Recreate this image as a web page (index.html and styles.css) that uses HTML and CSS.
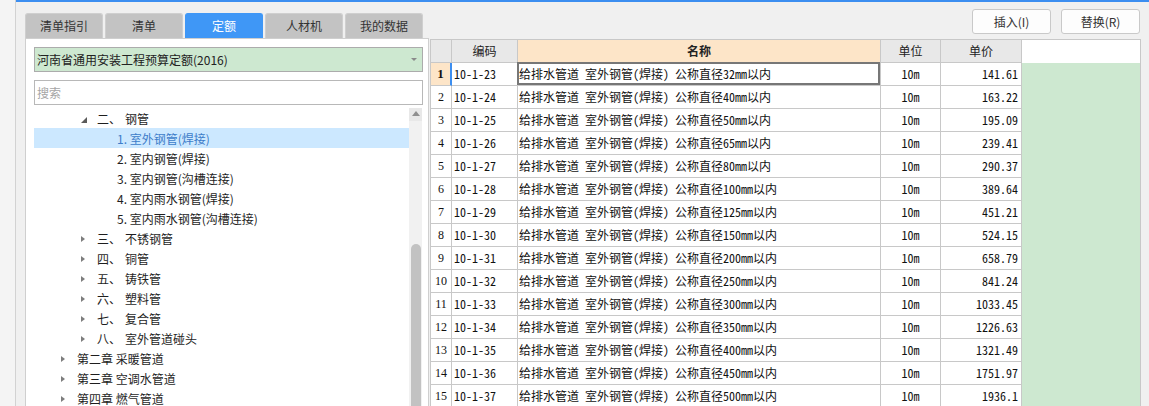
FILE: index.html
```html
<!DOCTYPE html>
<html lang="zh-CN">
<head>
<meta charset="utf-8">
<title>定额</title>
<link rel="stylesheet" href="styles.css">
</head>
<body>
<div class="app">
  <div class="strip"></div>
  <div class="main">
    <div class="topbar">
      <div class="tabs">
        <div class="tab">清单指引</div>
        <div class="tab">清单</div>
        <div class="tab active">定额</div>
        <div class="tab">人材机</div>
        <div class="tab">我的数据</div>
      </div>
      <div class="actions">
        <button class="btn">插入(I)</button>
        <button class="btn">替换(R)</button>
      </div>
    </div>
    <div class="content">
      <div class="panel">
        <div class="select"><span>河南省通用安装工程预算定额(2016)</span><i class="caret"></i></div>
        <div class="search">搜索</div>
        <div class="treewrap">
          <ul class="tree">
            <li class="node l2"><i class="tw open"></i><span class="ord">二、</span><span class="lbl">钢管</span></li>
            <li class="node l3 selected">1. 室外钢管(焊接)</li>
            <li class="node l3">2. 室内钢管(焊接)</li>
            <li class="node l3">3. 室内钢管(沟槽连接)</li>
            <li class="node l3">4. 室内雨水钢管(焊接)</li>
            <li class="node l3">5. 室内雨水钢管(沟槽连接)</li>
            <li class="node l2"><i class="tw"></i><span class="ord">三、</span><span class="lbl">不锈钢管</span></li>
            <li class="node l2"><i class="tw"></i><span class="ord">四、</span><span class="lbl">铜管</span></li>
            <li class="node l2"><i class="tw"></i><span class="ord">五、</span><span class="lbl">铸铁管</span></li>
            <li class="node l2"><i class="tw"></i><span class="ord">六、</span><span class="lbl">塑料管</span></li>
            <li class="node l2"><i class="tw"></i><span class="ord">七、</span><span class="lbl">复合管</span></li>
            <li class="node l2"><i class="tw"></i><span class="ord">八、</span><span class="lbl">室外管道碰头</span></li>
            <li class="node l1"><i class="tw"></i>第二章 采暖管道</li>
            <li class="node l1"><i class="tw"></i>第三章 空调水管道</li>
            <li class="node l1"><i class="tw"></i>第四章 燃气管道</li>
          </ul>
          <div class="scrollbar"><div class="up"></div><div class="track"><div class="thumb"></div></div></div>
        </div>
      </div>
      <div class="grid">
        <div class="c h"></div><div class="c h">编码</div><div class="c h name">名称</div><div class="c h">单位</div><div class="c h">单价</div><div class="c h fill"></div>

        <div class="c rn cur">1</div><div class="c code">10-1-23</div><div class="c nm sel">给排水管道 室外钢管(焊接) 公称直径32mm以内</div><div class="c un">10m</div><div class="c pr">141.61</div><div class="c fill"></div>
        <div class="c rn">2</div><div class="c code">10-1-24</div><div class="c nm">给排水管道 室外钢管(焊接) 公称直径40mm以内</div><div class="c un">10m</div><div class="c pr">163.22</div><div class="c fill"></div>
        <div class="c rn">3</div><div class="c code">10-1-25</div><div class="c nm">给排水管道 室外钢管(焊接) 公称直径50mm以内</div><div class="c un">10m</div><div class="c pr">195.09</div><div class="c fill"></div>
        <div class="c rn">4</div><div class="c code">10-1-26</div><div class="c nm">给排水管道 室外钢管(焊接) 公称直径65mm以内</div><div class="c un">10m</div><div class="c pr">239.41</div><div class="c fill"></div>
        <div class="c rn">5</div><div class="c code">10-1-27</div><div class="c nm">给排水管道 室外钢管(焊接) 公称直径80mm以内</div><div class="c un">10m</div><div class="c pr">290.37</div><div class="c fill"></div>
        <div class="c rn">6</div><div class="c code">10-1-28</div><div class="c nm">给排水管道 室外钢管(焊接) 公称直径100mm以内</div><div class="c un">10m</div><div class="c pr">389.64</div><div class="c fill"></div>
        <div class="c rn">7</div><div class="c code">10-1-29</div><div class="c nm">给排水管道 室外钢管(焊接) 公称直径125mm以内</div><div class="c un">10m</div><div class="c pr">451.21</div><div class="c fill"></div>
        <div class="c rn">8</div><div class="c code">10-1-30</div><div class="c nm">给排水管道 室外钢管(焊接) 公称直径150mm以内</div><div class="c un">10m</div><div class="c pr">524.15</div><div class="c fill"></div>
        <div class="c rn">9</div><div class="c code">10-1-31</div><div class="c nm">给排水管道 室外钢管(焊接) 公称直径200mm以内</div><div class="c un">10m</div><div class="c pr">658.79</div><div class="c fill"></div>
        <div class="c rn">10</div><div class="c code">10-1-32</div><div class="c nm">给排水管道 室外钢管(焊接) 公称直径250mm以内</div><div class="c un">10m</div><div class="c pr">841.24</div><div class="c fill"></div>
        <div class="c rn">11</div><div class="c code">10-1-33</div><div class="c nm">给排水管道 室外钢管(焊接) 公称直径300mm以内</div><div class="c un">10m</div><div class="c pr">1033.45</div><div class="c fill"></div>
        <div class="c rn">12</div><div class="c code">10-1-34</div><div class="c nm">给排水管道 室外钢管(焊接) 公称直径350mm以内</div><div class="c un">10m</div><div class="c pr">1226.63</div><div class="c fill"></div>
        <div class="c rn">13</div><div class="c code">10-1-35</div><div class="c nm">给排水管道 室外钢管(焊接) 公称直径400mm以内</div><div class="c un">10m</div><div class="c pr">1321.49</div><div class="c fill"></div>
        <div class="c rn">14</div><div class="c code">10-1-36</div><div class="c nm">给排水管道 室外钢管(焊接) 公称直径450mm以内</div><div class="c un">10m</div><div class="c pr">1751.97</div><div class="c fill"></div>
        <div class="c rn">15</div><div class="c code">10-1-37</div><div class="c nm">给排水管道 室外钢管(焊接) 公称直径500mm以内</div><div class="c un">10m</div><div class="c pr">1936.1</div><div class="c fill"></div>
      </div>
    </div>
  </div>
</div>
</body>
</html>
```

FILE: styles.css
```css
* { box-sizing: border-box; margin: 0; padding: 0; }
html, body { height: 100%; }
body {
  background: #f0f0f0;
  font-family: "Noto Sans CJK SC", "Microsoft YaHei", sans-serif;
  font-size: 12px;
  color: #222;
  overflow: hidden;
}
.app { display: flex; height: 100vh; }
.strip { width: 16px; flex: none; background: #f4f4f4; border-right: 1px solid #d2d2d2; }
.main { flex: 1; min-width: 0; display: flex; flex-direction: column; border-top: 2px solid #3c8ef0; }

.topbar { height: 36px; flex: none; display: flex; justify-content: space-between; padding: 0 9px; }
.tabs { display: flex; gap: 2px; align-self: flex-end; }
.tab {
  width: 78px; height: 25px; line-height: 24px; text-align: center;
  background: #c3c3c3; border: 1px solid #cfcfcf; border-bottom: none;
  border-radius: 3px 3px 0 0; color: #333; font-size: 12px;
}
.tab.active { background: #3f97f6; border-color: #3f97f6; color: #fff; }
.actions { display: flex; gap: 10px; margin-top: 7px; }
.btn {
  width: 79px; height: 25px; background: #fdfdfd; border: 1px solid #c9c9c9; border-radius: 3px;
  font-family: "Noto Sans CJK SC", sans-serif; font-size: 12px; color: #333;
}

.content { flex: 1; min-height: 0; display: flex; padding: 0 8px 0 9px; }
.panel {
  width: 404px; flex: none; margin-right: 1px; background: #fff;
  border: 1px solid #cfcfcf; border-bottom: none;
  padding: 8px 5px 0 8px; display: flex; flex-direction: column; min-height: 0;
}
.select {
  height: 25px; flex: none; background: #cde8d0; border: 1px solid #acacac;
  display: flex; align-items: center; justify-content: space-between; padding: 0 5px 0 2px;
  color: #222;
}
.caret { width: 0; height: 0; border-top: 3px solid #8a8a8a; border-left: 3px solid transparent; border-right: 3px solid transparent; }
.search {
  height: 25px; flex: none; margin-top: 8px; border: 1px solid #b8b8b8;
  line-height: 23px; padding-left: 2px; color: #a5a5a5;
}
.treewrap { flex: 1; min-height: 0; margin-top: 3px; display: flex; overflow: hidden; }
.tree { flex: 1; list-style: none; }
.node { height: 20px; line-height: 18px; padding-top: 2px; display: flex; align-items: center; color: #1e1e1e; white-space: nowrap; }
.node.l1 { padding-left: 27px; }
.node.l2 { padding-left: 47px; }
.node.l3 { padding-left: 83px; }
.node.selected { background: #cce8ff; color: #3d7cc9; }
.tw { width: 16px; flex: none; display: flex; }
.tw::before {
  content: ""; width: 0; height: 0;
  border-left: 4px solid #7d7d7d; border-top: 3.5px solid transparent; border-bottom: 3.5px solid transparent;
}
.tw.open::before {
  border: none; border-bottom: 6px solid #5a5a5a; border-left: 6px solid transparent; margin-top: 2px;
}
.ord { width: 28px; }
.scrollbar { width: 13px; flex: none; margin-right: 1px; display: flex; flex-direction: column; background: #f1f1f1; }
.up { height: 13px; flex: none; background: #e8e8e8; display: flex; justify-content: center; padding-top: 3px; }
.up::before { content: ""; width: 0; height: 0; border-bottom: 5px solid #8f8f8f; border-left: 4.5px solid transparent; border-right: 4.5px solid transparent; }
.track { flex: 1; padding: 123px 1px 0 2px; }
.thumb { height: 100%; background: #c2c2c2; border-radius: 5px 5px 0 0; }

.grid {
  width: 711px; flex: none; margin-top: 1px; background: #fff;
  border: 1px solid #c8c8c8; border-bottom: none; overflow: hidden;
  display: grid; grid-template-columns: 21px 66px 363px 60px 81px 118px;
  grid-auto-rows: 23px; align-content: start;
}
.c {
  border-right: 1px solid #c8c8c8; border-bottom: 1px solid #c8c8c8;
  line-height: 22px; white-space: nowrap; overflow: hidden;
  font-family: "Noto Sans Mono CJK SC", "Noto Sans CJK SC", monospace; font-size: 12px; color: #111;
}
.c.h { background: #e8e8e8; text-align: center; font-family: "Noto Sans CJK SC", sans-serif; color: #222; }
.c.h.name { background: #fde5c8; font-weight: bold; }
.c.fill { background: #cde8d0; border: none; }
.c.h.fill { background: #fff; }
.rn { text-align: center; font-family: "Liberation Serif", serif; }
.rn.cur { background: #fde5c8; font-weight: bold; font-size: 13px; border-right: 2px solid #3c8ef0; }
.code { padding-left: 2px; }
.nm { padding-left: 1px; }
.nm.sel { position: relative; overflow: visible; }
.nm.sel::after { content: ""; position: absolute; left: -1px; top: -1px; right: 0; bottom: 0; border: 2px solid #777; }
.un { text-align: center; }
.pr { text-align: right; padding-right: 3px; }
```
